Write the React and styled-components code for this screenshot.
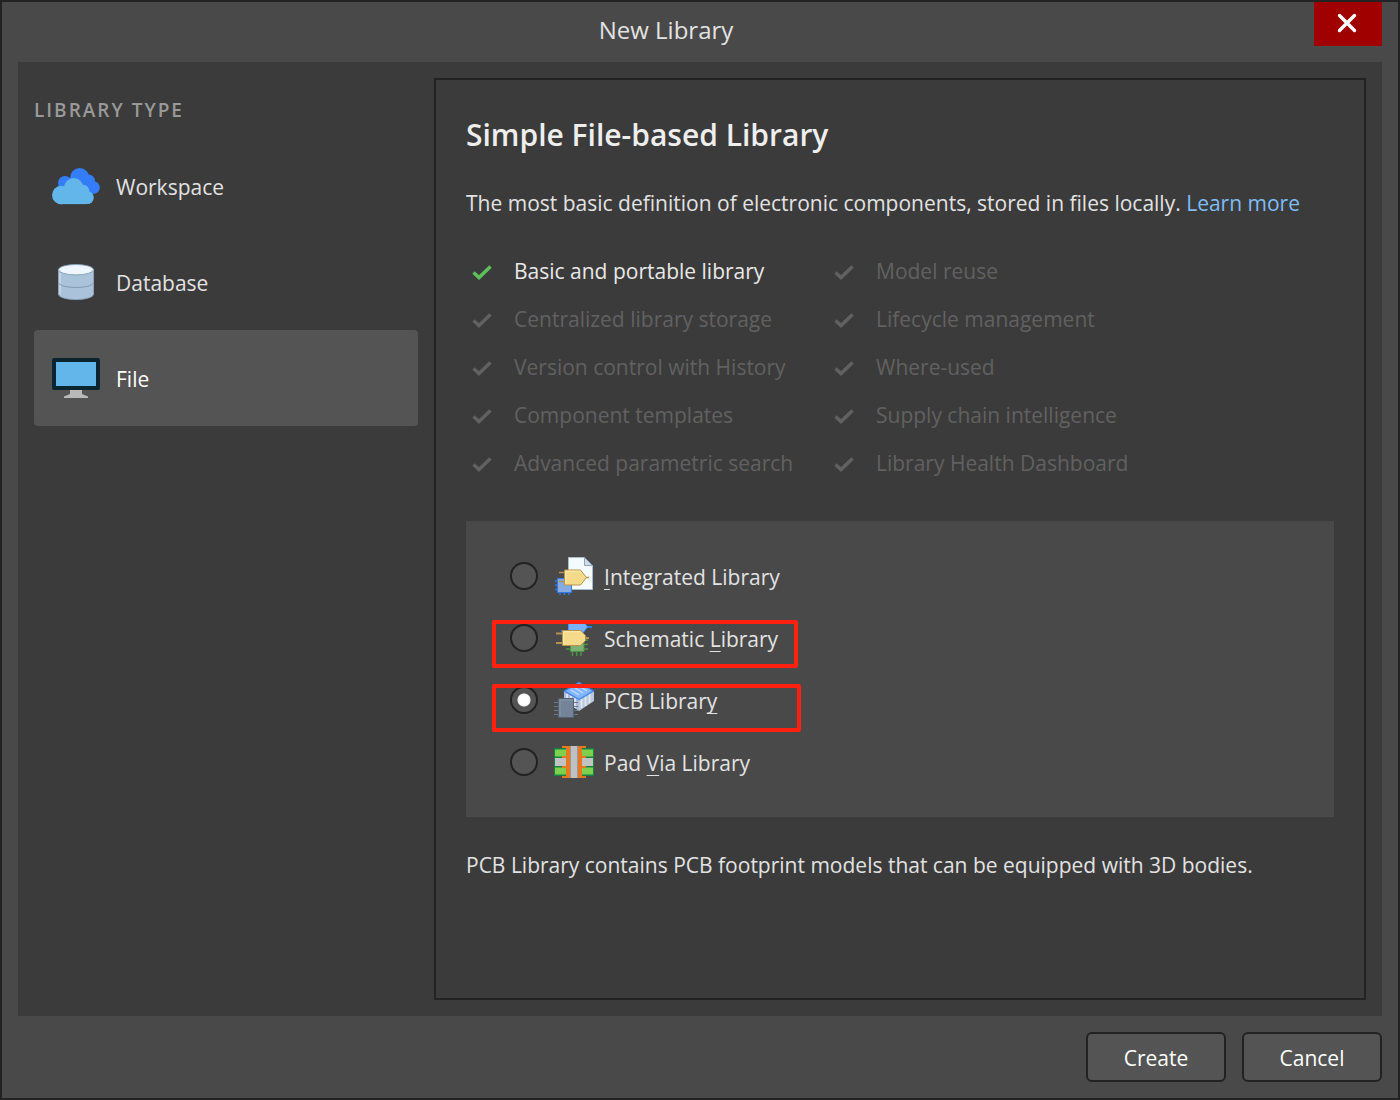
import React, { useState } from "react";
import styled, { createGlobalStyle } from "styled-components";

const GlobalStyle = createGlobalStyle`
  *, *::before, *::after { box-sizing: border-box; }
  body {
    margin: 0;
    background: #494949;
    font-family: "Open Sans", "Noto Sans", sans-serif;
    font-size: 21px;
    line-height: 32px;
    color: #e2e2e2;
  }
  button, input { font: inherit; color: inherit; }
`;

const Dialog = styled.main`
  display: flex;
  flex-direction: column;
  min-height: 100vh;
  border: 2px solid #222;
  background: #494949;
`;

const TitleBar = styled.header`
  display: flex;
  align-items: flex-start;
  height: 60px;
  padding: 0 16px;
`;

const Title = styled.h1`
  flex: 1;
  margin: 0;
  padding-top: 12px;
  font-size: 24px;
  font-weight: 400;
  text-align: center;
`;

const CloseButton = styled.button`
  display: flex;
  align-items: center;
  justify-content: center;
  width: 68px;
  height: 44px;
  padding: 0 2px 2px 0;
  border: 0;
  background: #a00000;
`;

const Body = styled.div`
  display: flex;
  flex: 1;
  gap: 16px;
  margin: 0 16px;
  padding: 16px;
  background: #3b3b3b;
`;

const Sidebar = styled.nav`
  display: flex;
  flex-direction: column;
  flex: 0 0 384px;
`;

const SidebarHeading = styled.h2`
  height: 32px;
  margin: 0 0 28px;
  padding-top: 16px;
  font-size: 19px;
  font-weight: 600;
  letter-spacing: 2px;
  line-height: 32px;
  color: #999;
`;

const TypeButton = styled.button`
  display: flex;
  align-items: center;
  gap: 16px;
  height: 96px;
  padding: 0 18px;
  border: 0;
  border-radius: 4px;
  text-align: left;
  background: ${(p) => (p.$active ? "#545454" : "transparent")};
  color: ${(p) => (p.$active ? "#fff" : "#e2e2e2")};
`;

const ItemLabel = styled.span`
  padding-top: 2px;
`;

const Panel = styled.section`
  flex: 1;
  min-width: 0;
  padding: 31px 30px;
  border: 2px solid #222;
`;

const PanelTitle = styled.h2`
  margin: 0 0 28px;
  font-size: 30px;
  font-weight: 600;
  line-height: 48px;
  color: #eee;
`;

const Text = styled.p`
  margin: 0;
`;

const Link = styled.a`
  color: #7fbcf5;
  text-decoration: none;
`;

const Features = styled.ul`
  display: grid;
  grid-template-columns: 362px 1fr;
  grid-template-rows: repeat(5, 48px);
  grid-auto-flow: column;
  margin: 29px 0 33px;
  padding: 0;
  list-style: none;
`;

const Feature = styled.li`
  display: flex;
  align-items: center;
  gap: 22px;
  padding-left: 6px;
  color: ${(p) => (p.$on ? "#e8e8e8" : "#616161")};

  svg { color: ${(p) => (p.$on ? "#5fbf5a" : "#616161")}; }
`;

const FeatureName = styled.span`
  padding-bottom: 2px;
`;

const Options = styled.div`
  display: flex;
  flex-direction: column;
  padding: 24px 26px;
  margin-bottom: 32px;
  background: #494949;
`;

const Option = styled.label`
  position: relative;
  display: flex;
  align-items: center;
  height: 62px;
  padding-left: 18px;

  svg { margin: 0 10px 0 16px; }
  u { text-decoration-thickness: 1px; text-underline-offset: 4px; text-decoration-skip-ink: none; }
`;

const Radio = styled.input`
  appearance: none;
  width: 28px;
  height: 28px;
  margin: 0;
  border: 2px solid #222;
  border-radius: 50%;
  background: #545454;

  &:checked {
    background: radial-gradient(circle, #fff 6px, #545454 7px);
  }
`;

const Highlight = styled.span`
  position: absolute;
  left: 0;
  top: ${(p) => p.$top}px;
  width: ${(p) => p.$width}px;
  height: 48px;
  border: 4px solid #ff2010;
  border-radius: 2px;
  pointer-events: none;
`;

const Footer = styled.footer`
  display: flex;
  justify-content: flex-end;
  gap: 16px;
  padding: 16px;
`;

const ActionButton = styled.button`
  width: 140px;
  height: 50px;
  padding: 2px 0 0;
  border: 2px solid #222;
  border-radius: 6px;
  background: #545454;
  color: #fff;
`;

const CloudIcon = () => (
  <svg width="48" height="48" viewBox="0 0 48 48" aria-hidden="true">
    <g fill="#337dfa">
      <circle cx="27.7" cy="15.5" r="9.5" />
      <circle cx="13" cy="21" r="7" />
      <circle cx="36.5" cy="19" r="6.5" />
      <circle cx="41.5" cy="25.5" r="6.3" />
      <path d="M14 16h24l4 15.8H14z" />
    </g>
    <g fill="#62b6ea">
      <circle cx="9.2" cy="33" r="9.2" />
      <circle cx="21.7" cy="25.5" r="9.5" />
      <circle cx="31" cy="29" r="6.2" />
      <circle cx="35.3" cy="35.6" r="6.5" />
      <path d="M9 30h26v12.1H9z" />
    </g>
  </svg>
);

const DatabaseIcon = () => (
  <svg width="48" height="48" viewBox="0 0 48 48" aria-hidden="true">
    <path d="M6.5 11.7v24.5c0 3 8 5.3 17.5 5.3s17.5-2.3 17.5-5.3V11.7z" fill="#aac3da" stroke="#8aa3b9" />
    <path d="M8 15v21" stroke="#cddceb" strokeWidth="1.4" />
    <ellipse cx="24" cy="11.7" rx="17.5" ry="5.2" fill="#f0f6ff" stroke="#8aa3b9" />
    <path d="M6.5 25c2 3 9 4.4 17.5 4.4S39.5 28 41.5 25" fill="none" stroke="#7e99b0" />
  </svg>
);

const MonitorIcon = () => (
  <svg width="48" height="48" viewBox="0 0 48 48" aria-hidden="true">
    <rect y="4" width="48" height="32" rx="2" fill="#0a252f" />
    <path d="M4 8h40v24H4z" fill="#62b6ea" />
    <path d="M18 36h12v4l6 2.5V44H12v-1.5l6-2.5z" fill="#b9b9b9" />
  </svg>
);

const CheckIcon = () => (
  <svg width="20" height="16" viewBox="0 0 20 16" aria-hidden="true">
    <path d="M1.5 8.5 7 13.5 18.500 2.500" fill="none" stroke="currentColor" strokeWidth="3.500" />
  </svg>
);

const CloseIcon = () => (
  <svg width="20" height="20" viewBox="0 0 20 20" aria-hidden="true">
    <path d="M2.5 2.5 17.5 17.5M17.5 2.5 2.5 17.5" stroke="#fff" strokeWidth="3.4" strokeLinecap="round" />
  </svg>
);

const IntegratedIcon = () => (
  <svg width="40" height="40" viewBox="0 0 40 40" aria-hidden="true">
    <path d="M14.5 1.5h16l8 8v24h-24z" fill="#f3fbff" stroke="#a9bccb" />
    <path d="M30.5 1.5v8h8z" fill="#cbdbe7" stroke="#8fa5b7" />
    <path d="M1 25h3M1 29h3M1 33.5h3M6 36v3M10.5 36v3M15 36v3" stroke="#2f7ae5" strokeWidth="1.5" />
    <path d="M3.5 22.5h14v14h-14z" fill="#86abe2" stroke="#2f7ae5" />
    <path d="M5 16.5h5M5 25.5h5M32 21.5h3" stroke="#b39153" strokeWidth="1.5" />
    <path d="M10.5 14h16l6 7.5-6 7.5h-16z" fill="#f5da8b" stroke="#b8924a" />
    <path d="M11.7 28V15.2H26" fill="none" stroke="#fbe9b5" />
  </svg>
);

const SchematicIcon = () => (
  <svg width="40" height="40" viewBox="0 0 40 40" aria-hidden="true">
    <path d="M7 13h8M31 9h7" stroke="#2f7ae5" strokeWidth="1.8" />
    <path d="M14.5 3.5h15l4 5.5-5.500 7h-13.500z" fill="#7ab1ff" stroke="#4c90f2" />
    <path d="M12 31h22M30 22h4M30 26.5h4M18.5 33v5M22.7 33v5M27 33v5" stroke="#4c9247" strokeWidth="1.5" />
    <path d="M16.5 20.5h13.5v13H16.5z" fill="#7cb074" stroke="#4c9247" />
    <path d="M2 15.5h6M2 25h6M31 20h4" stroke="#b39153" strokeWidth="1.8" />
    <path d="M8.5 12.5h18l5 5v5l-5 5h-18z" fill="#f5da8b" stroke="#b8924a" />
    <path d="M9.7 26.5V13.7H26" fill="none" stroke="#fbe9b5" />
  </svg>
);

const PcbIcon = () => (
  <svg width="40" height="40" viewBox="0 0 40 40" aria-hidden="true">
    <path d="M10 11v10l15 10V19z" fill="#aebbd6" />
    <path d="M25 19v12l15-10V11z" fill="#bcc9dd" />
    <path d="M13 14v10M17 16v10M21 18v10M27.5 19v9M31.5 17v9M35.5 14v9" stroke="#e1e9f2" strokeWidth="1.7" />
    <path d="M25 2.5 39.5 11 25 19.5 10.5 11z" fill="#82b5ff" stroke="#3d87ed" strokeWidth="1.3" />
    <path d="m17 10 8 5M21 8l8 5M25 6l8 5" stroke="#c4dcff" strokeWidth="1.3" />
    <path d="M0 22.5h24M0 26.5h24M0 30.5h24M0 34.5h24" stroke="#68798a" />
    <path d="M4.5 18.5h15v19h-15z" fill="#748397" stroke="#536273" />
    <path d="M6 36V20h13" fill="none" stroke="#8797a8" />
  </svg>
);

const PadViaIcon = () => (
  <svg width="40" height="40" viewBox="0 0 40 40" aria-hidden="true">
    <path d="M0 6h40v28H0z" fill="#168142" />
    <path d="M1 7.5h38v7H1zM1 25.500h38v7H1z" fill="#80d04f" />
    <path d="M1 16h38v8H1z" fill="#c2c2c2" />
    <path d="M8 4h24v2h-4v8h4v2h-4v8h4v2h-4v8h4v2H8v-2h4v-8H8v-2h4v-8H8v-2h4V6H8z" fill="#e87722" />
    <path d="M16 4h8v32h-8z" fill="#c0c0c0" />
    <path d="M16.5 4v32M23.5 4v32" stroke="#999" />
  </svg>
);

const libraryTypes = [
  { name: "Workspace", Icon: CloudIcon },
  { name: "Database", Icon: DatabaseIcon },
  { name: "File", Icon: MonitorIcon },
];

const features = [
  "Basic and portable library",
  "Centralized library storage",
  "Version control with History",
  "Component templates",
  "Advanced parametric search",
  "Model reuse",
  "Lifecycle management",
  "Where-used",
  "Supply chain intelligence",
  "Library Health Dashboard",
];

const options = [
  { id: "integrated", label: <><u>I</u>ntegrated Library</>, Icon: IntegratedIcon },
  { id: "schematic", label: <>Schematic <u>L</u>ibrary</>, Icon: SchematicIcon, mark: { top: 13, width: 306 } },
  { id: "pcb", label: <>PCB Librar<u>y</u></>, Icon: PcbIcon, mark: { top: 15, width: 309 } },
  { id: "padvia", label: <>Pad <u>V</u>ia Library</>, Icon: PadViaIcon },
];

export default function App() {
  const [type, setType] = useState("File");
  const [selected, setSelected] = useState("pcb");

  return (
    <>
      <GlobalStyle />
      <Dialog>
        <TitleBar>
          <Title>New Library</Title>
          <CloseButton type="button" aria-label="Close"><CloseIcon /></CloseButton>
        </TitleBar>
        <Body>
          <Sidebar>
            <SidebarHeading>LIBRARY TYPE</SidebarHeading>
            {libraryTypes.map(({ name, Icon }) => (
              <TypeButton key={name} type="button" $active={type === name} onClick={() => setType(name)}>
                <Icon />
                <ItemLabel>{name}</ItemLabel>
              </TypeButton>
            ))}
          </Sidebar>
          <Panel>
            <PanelTitle>Simple File-based Library</PanelTitle>
            <Text>
              The most basic definition of electronic components, stored in files locally.{" "}
              <Link href="#learn-more">Learn more</Link>
            </Text>
            <Features>
              {features.map((name, i) => (
                <Feature key={name} $on={i === 0}>
                  <CheckIcon />
                  <FeatureName>{name}</FeatureName>
                </Feature>
              ))}
            </Features>
            <Options role="radiogroup" aria-label="Library file">
              {options.map(({ id, label, Icon, mark }) => (
                <Option key={id}>
                  <Radio type="radio" name="library" checked={selected === id} onChange={() => setSelected(id)} />
                  <Icon />
                  <ItemLabel>{label}</ItemLabel>
                  {mark && <Highlight $top={mark.top} $width={mark.width} />}
                </Option>
              ))}
            </Options>
            <Text>PCB Library contains PCB footprint models that can be equipped with 3D bodies.</Text>
          </Panel>
        </Body>
        <Footer>
          <ActionButton type="button">Create</ActionButton>
          <ActionButton type="button">Cancel</ActionButton>
        </Footer>
      </Dialog>
    </>
  );
}
